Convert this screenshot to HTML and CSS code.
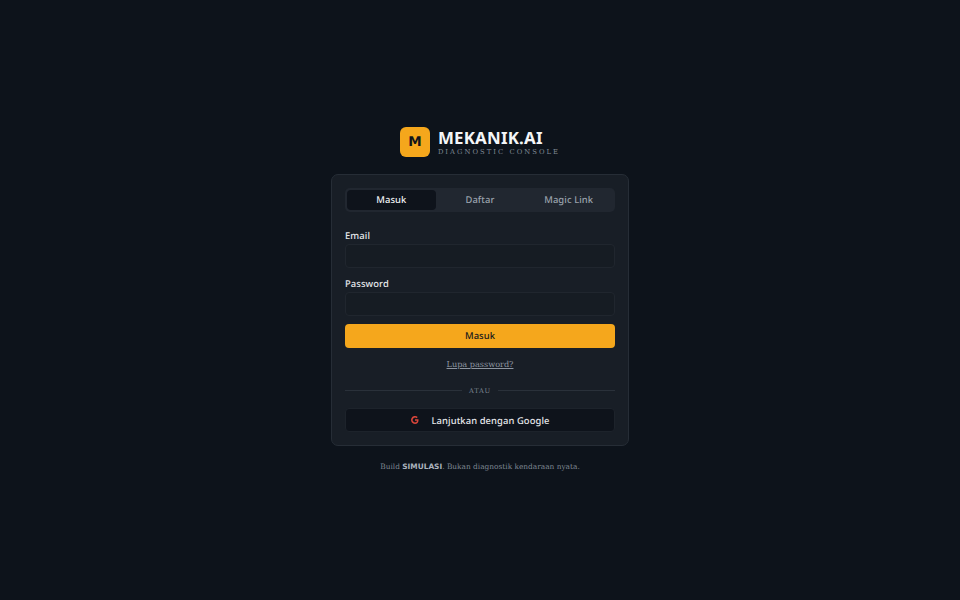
FILE: index.html
```html
<!DOCTYPE html>
<html lang="id">
<head>
<meta charset="utf-8">
<title>Mekanik.AI</title>
<link rel="stylesheet" href="styles.css">
</head>
<body>
<main class="page">
  <header class="brand">
    <div class="logo">M</div>
    <div class="brand-text">
      <div class="brand-name">MEKANIK.AI</div>
      <div class="brand-sub">DIAGNOSTIC CONSOLE</div>
    </div>
  </header>
  <section class="card">
    <div class="tabs">
      <button class="tab tab-active">Masuk</button>
      <button class="tab">Daftar</button>
      <button class="tab">Magic Link</button>
    </div>
    <form class="form">
      <div class="field">
        <label class="label">Email</label>
        <div class="input"></div>
      </div>
      <div class="field">
        <label class="label">Password</label>
        <div class="input"></div>
      </div>
      <button type="button" class="submit">Masuk</button>
    </form>
    <a class="forgot">Lupa password?</a>
    <div class="divider"><span class="rule"></span><span class="or">ATAU</span><span class="rule"></span></div>
    <button class="google">
      <svg class="g-icon" viewBox="0 0 24 24" width="10" height="10" aria-hidden="true"><path d="M20.5 12.2c0-.7-.1-1.3-.2-1.900H12v3.700h4.800c-.5 2.300-2.400 3.700-4.800 3.700a5.700 5.700 0 1 1 3.800-10l2.800-2.800A9.600 9.600 0 1 0 12 21.600c5 0 8.500-3.500 8.500-9.400z" fill="#d9453a"/></svg>
      <span>Lanjutkan dengan Google</span>
    </button>
  </section>
  <p class="foot">Build <strong class="foot-strong">SIMULASI</strong>. Bukan diagnostik kendaraan nyata.</p>
</main>
</body>
</html>
```
FILE: styles.css
```css
* { box-sizing: border-box; }
html, body { margin: 0; height: 100%; }
body {
  background: #0d131b;
  color: #e6e8eb;
  font-family: "Noto Sans", sans-serif;
  text-rendering: geometricPrecision;
}
.page {
  height: 600px;
  display: flex;
  flex-direction: column;
  align-items: center;
  justify-content: center;
}
.brand {
  display: flex;
  align-items: center;
  gap: 8px;
  height: 30px;
  margin-bottom: 17px;
}
.logo {
  width: 30px;
  height: 30px;
  border-radius: 6px;
  background: #f5a71c;
  color: #10141a;
  display: flex;
  align-items: center;
  justify-content: center;
  font: 700 13.5px "DejaVu Sans", sans-serif;
}
.brand-text { display: flex; flex-direction: column; }
.brand-name {
  font: 700 16.9px/21px "Noto Sans", sans-serif;
  color: #f4f6f8;
  letter-spacing: 0.2px;
}
.brand-sub {
  font: 400 6.8px/9px "DejaVu Serif", serif;
  letter-spacing: 2.03px;
  color: #7f8893;
}
.card {
  width: 298px;
  height: 272px;
  padding: 13px;
  background: #181e26;
  border: 1px solid #262d36;
  border-radius: 7px;
  display: flex;
  flex-direction: column;
}
.tabs {
  display: flex;
  height: 24px;
  padding: 2px;
  background: #212730;
  border-radius: 5px;
}
.tab {
  flex: 1;
  border: 0;
  background: none;
  padding: 0;
  border-radius: 4px;
  font: 500 9.4px "Noto Sans", sans-serif;
  letter-spacing: 0.1px;
  color: #9aa2ac;
  text-rendering: geometricPrecision;
}
.tab-active { background: #0e131b; color: #f0f2f4; }
.form { display: flex; flex-direction: column; margin-top: 16px; }
.field { display: flex; flex-direction: column; margin-bottom: 8px; }
.label {
  font: 500 9.4px/16px "Noto Sans", sans-serif;
  letter-spacing: 0.1px;
  color: #e6e8eb;
}
.input {
  height: 24px;
  background: #161c23;
  border: 1px solid #20262e;
  border-radius: 4px;
}
.submit {
  height: 24px;
  border: 0;
  border-radius: 4px;
  background: #f5a71c;
  color: #14171c;
  font: 500 9.4px "Noto Sans", sans-serif;
  letter-spacing: 0.1px;
  text-rendering: geometricPrecision;
}
.forgot {
  align-self: center;
  margin-top: 10px;
  font: 400 8.15px/13px "DejaVu Serif", serif;
  color: #8d95a0;
  text-decoration: underline;
}
.divider {
  display: flex;
  align-items: center;
  gap: 7px;
  margin-top: 11px;
  height: 18px;
}
.rule { flex: 1; height: 1px; background: #2a313a; }
.or {
  font: 400 6.7px/10px "DejaVu Serif", serif;
  letter-spacing: 0.7px;
  color: #7f8893;
}
.google {
  margin-top: 9px;
  height: 24px;
  border: 1px solid #1d232b;
  border-radius: 4px;
  background: #0e131b;
  color: #e6e8eb;
  font: 500 9.4px "Noto Sans", sans-serif;
  letter-spacing: 0.1px;
  text-rendering: geometricPrecision;
  display: flex;
  align-items: center;
  justify-content: center;
  gap: 11px;
  padding: 0;
}
.g-icon { display: block; }
.foot {
  margin: 15px 0 0;
  font: 400 7.4px/12px "DejaVu Serif", serif;
  color: #7f8893;
}
.foot-strong { font: 700 7.4px/12px "DejaVu Sans", sans-serif; color: #aab2bc; }
```
